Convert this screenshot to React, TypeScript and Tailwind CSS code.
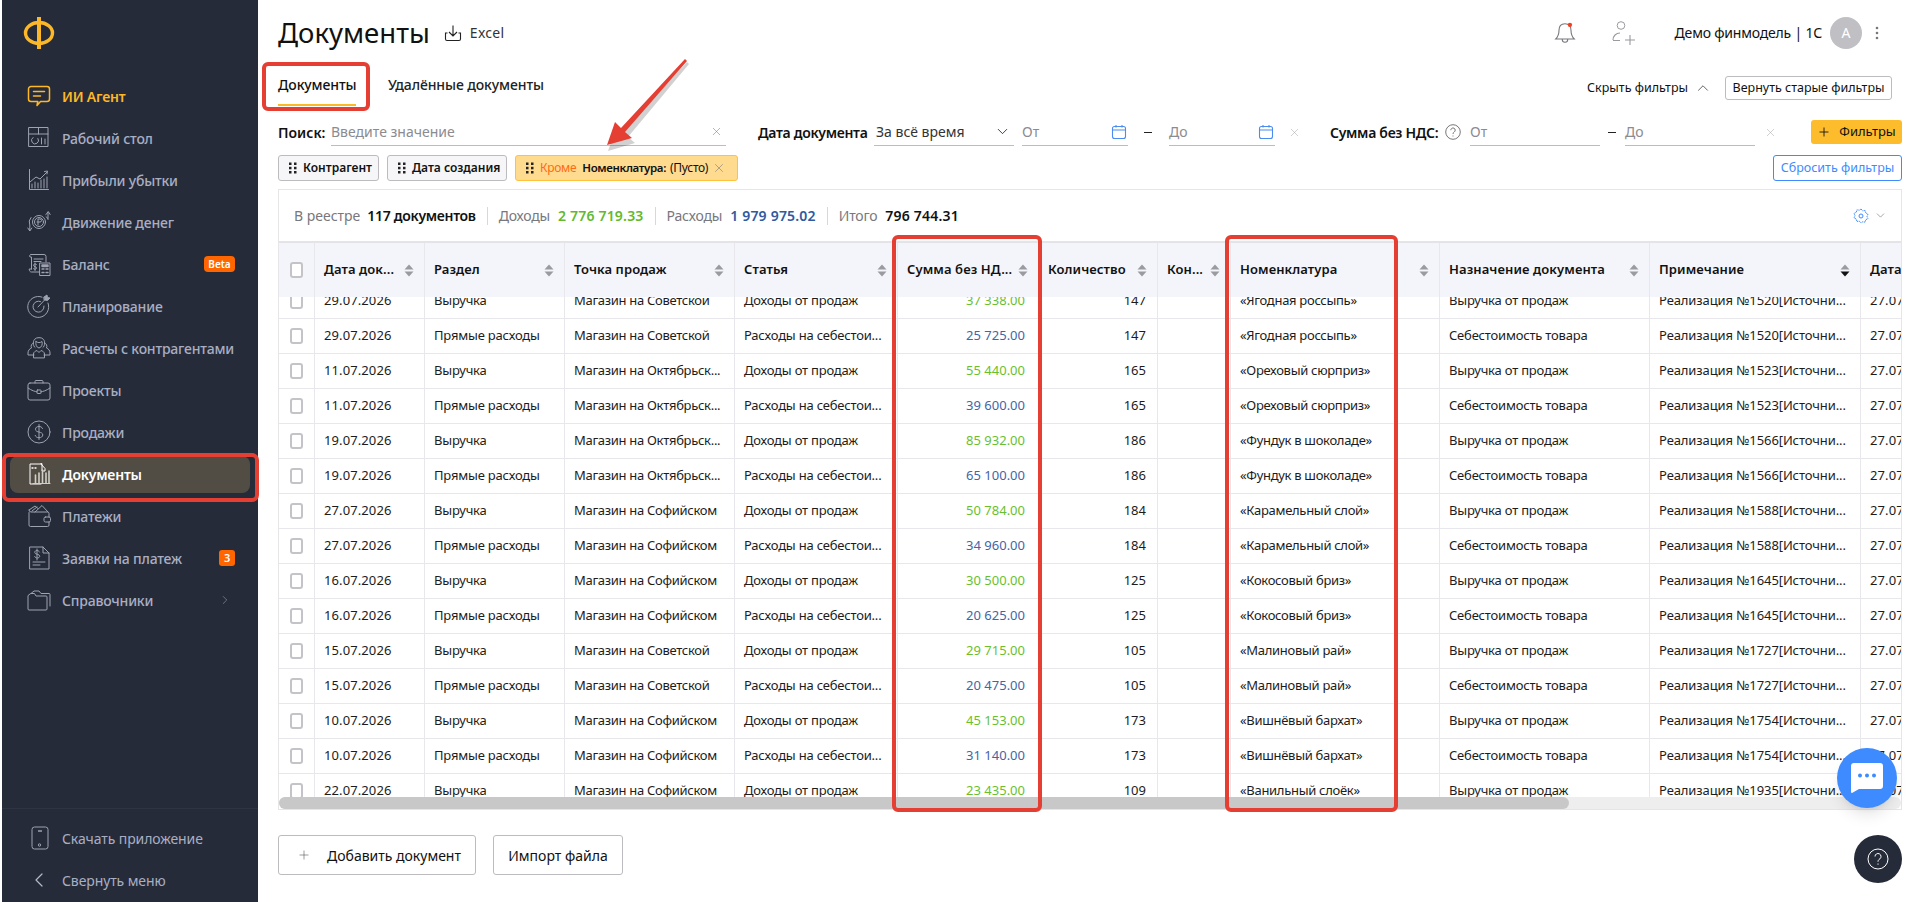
import React from 'react';
import { ChevronDown, ChevronUp, ChevronRight, ChevronLeft, X, Plus } from 'lucide-react';

type IconProps = { className?: string };

const Svg: React.FC<React.PropsWithChildren<{ className?: string; size?: number }>> = ({ className, size = 24, children }) => (
  <svg width={size} height={size} viewBox="0 0 24 24" fill="none" stroke="currentColor" strokeWidth={1} strokeLinecap="round" strokeLinejoin="round" className={className}>
    {children}
  </svg>
);

const AgentIcon = ({ className }: IconProps) => (
  <svg width={24} height={24} viewBox="0 0 24 24" fill="none" stroke="currentColor" strokeWidth={1.5} strokeLinecap="round" strokeLinejoin="round" className={className}>
    <path d="M4 2.500h16a2.500 2.500 0 0 1 2.500 2.500v10a2.500 2.500 0 0 1-2.500 2.500h-6.500l-3.500 4 .8-4H4A2.500 2.500 0 0 1 1.500 15V5A2.500 2.500 0 0 1 4 2.500z" />
    <path d="M6.500 7.500h11M6.500 12h7" />
  </svg>
);
const DeskIcon = ({ className }: IconProps) => (
  <Svg className={className}>
    <rect x="2" y="1.500" width="19" height="19" />
    <path d="M2 8h19M11.500 1.500V8" />
    <path d="M11 12.500a3.500 3.500 0 1 1-5-1" />
    <path d="M14.500 12v6M18 13v5" />
  </Svg>
);
const ProfitIcon = ({ className }: IconProps) => (
  <Svg className={className}>
    <path d="M2.500 1.500v20h19" />
    <path d="M5 20v-4M8 20v-6M11 20v-5M14 20v-8M17 20v-9M20 20V9" />
    <path d="M3 14l6-5 4 2 7-7M17.500 3.500l3-.5-.5 3" />
  </Svg>
);
const FlowIcon = ({ className }: IconProps) => (
  <Svg className={className}>
    <circle cx="12" cy="12" r="6.500" />
    <circle cx="12" cy="12" r="4.500" />
    <path d="M11 15v-6h2a1.500 1.500 0 0 1 0 3h-3" />
    <path d="M4 7.500A7 7 0 0 0 2.800 15v5M.8 18l2 3 2-3" />
    <path d="M19 6.500c1 .8 1.700 2 2 3V2.500M19 4.500l2.200-3 2 3" />
  </Svg>
);
const BalanceIcon = ({ className }: IconProps) => (
  <Svg className={className}>
    <path d="M4 2.500h13a2 2 0 0 1 2 2V10M4 2.500a1.500 1.500 0 0 0-1 2.500h1.500v12M4.500 17H2.200c0 2 1 3 2.300 3h8" />
    <path d="M7 7h9M7 9.500h7" />
    <path d="M9.500 12.500c-1-1-3-.5-3 .8 0 1.700 3 1 3 2.700 0 1.300-2 1.800-3 .8M8 11v7.500" />
    <rect x="13" y="11" width="10" height="12.500" />
    <path d="M15 13h6v1.500h-6zM15 17h2M19 17h2M15 20.500h2M19 20.500h2" strokeWidth={1.400} />
  </Svg>
);
const PlanIcon = ({ className }: IconProps) => (
  <Svg className={className}>
    <path d="M15 3.100A10.500 10.500 0 1 0 21 9" />
    <path d="M13.500 7.500A5.500 5.500 0 1 0 17 12" />
    <path d="M11 13l8-8.500" />
    <path d="M17 3l3-2 .5 2.500 2.500.5-2.500 2.500-3-.5z" fill="currentColor" />
  </Svg>
);
const PeopleIcon = ({ className }: IconProps) => (
  <Svg className={className}>
    <path d="M8 11.500C5.500 10 6 4 8 3c1-1.800 7-1.800 8 0 2 1 2.500 7 0 8.500" />
    <path d="M9 5.500c2 1.500 4 1.500 6 0 .8 3-.5 6-3 6.500-2.500-.5-3.800-3.500-3-6.500z" />
    <path d="M6.500 7c-2 .5-3 3-2 5-2 .8-3.500 2.500-3.500 5v2h6M17.500 7c2 .5 3 3 2 5 2 .8 3.500 2.500 3.500 5v2h-6" />
    <path d="M6.500 21.500V18c0-2 2-3 3.500-3.500l2 2 2-2c1.500.5 3.500 1.500 3.500 3.500v3.500z" />
  </Svg>
);
const CaseIcon = ({ className }: IconProps) => (
  <Svg className={className}>
    <rect x="1" y="5" width="22" height="17" rx="2" />
    <path d="M8 5V3.500a1 1 0 0 1 1-1h6a1 1 0 0 1 1 1V5" />
    <path d="M1 10c4 2.800 7 3.500 9 3.800M23 10c-4 2.800-7 3.500-9 3.800" />
    <rect x="10" y="12" width="4" height="3.500" rx=".5" />
  </Svg>
);
const SalesIcon = ({ className }: IconProps) => (
  <Svg className={className}>
    <circle cx="12" cy="12" r="11" />
    <path d="M15.500 8.500C15 7 13.500 6.500 12 6.500c-2 0-3.500 1-3.500 2.700 0 4 7.300 1.800 7.300 5.800 0 1.700-1.800 2.700-3.800 2.700-1.800 0-3.300-.8-3.800-2.300M12 4.500v15" />
  </Svg>
);
const DocsIcon = ({ className }: IconProps) => (
  <svg width={24} height={24} viewBox="0 0 24 24" fill="none" stroke="currentColor" strokeWidth={1} strokeLinecap="round" strokeLinejoin="round" className={className}>
    <path d="M14 2H3v20h11" stroke="#fff" />
    <path d="M14 2l4 4.500V9h-3V2z" stroke="#fff" />
    <path d="M5 6h1M8 6h1" stroke="#fff" strokeWidth={1.400} />
    <path d="M8.500 21v-8M12 21V11M15.500 21V8M19 21V11M22 21V9" stroke="#cfd0c8" strokeWidth={1.600} />
    <path d="M6 21.500h17" stroke="#cfd0c8" />
  </svg>
);
const WalletIcon = ({ className }: IconProps) => (
  <Svg className={className}>
    <path d="M2 8.500V21a1.500 1.500 0 0 0 1.500 1.500h17a1.500 1.500 0 0 0 1.500-1.500v-3M22 13V9.500A1.500 1.500 0 0 0 20.500 8H4a2 2 0 0 1-2-2" />
    <path d="M2 6l6-4 3 2.500M8 8l7-6.500L21 8M5 7l5-4" />
    <rect x="17" y="13" width="6.500" height="5" rx="1.500" />
  </Svg>
);
const RequestIcon = ({ className }: IconProps) => (
  <svg width={24} height={24} viewBox="0 0 24 24" fill="none" stroke="currentColor" strokeWidth={1} strokeLinecap="round" strokeLinejoin="round" className={className}>
    <path d="M3 1h13l6 6v16H3z" />
    <path d="M16 1v6h6" />
    <path d="M12.500 6C12 5 11 4.500 10 4.500c-1.300 0-2.300.7-2.300 1.800 0 2.700 5 1.200 5 3.900 0 1.100-1.200 1.800-2.500 1.800-1.200 0-2.200-.5-2.500-1.500M10 3v11" />
    <path d="M6 16h12M6 19h7" />
  </svg>
);
const FolderIcon = ({ className }: IconProps) => (
  <Svg className={className}>
    <path d="M1 8v13a1 1 0 0 0 1 1h17a1 1 0 0 0 1-1V9a1 1 0 0 0-1-1H9L7.500 5.500H4z" />
    <path d="M4 5.500l3-2.500h5l2 2.500h8a1 1 0 0 1 1 1V18" />
  </Svg>
);

const navItems: { label: string; Icon: React.FC<IconProps>; badge?: string }[] = [
  { label: 'Рабочий стол', Icon: DeskIcon },
  { label: 'Прибыли убытки', Icon: ProfitIcon },
  { label: 'Движение денег', Icon: FlowIcon },
  { label: 'Баланс', Icon: BalanceIcon, badge: 'Beta' },
  { label: 'Планирование', Icon: PlanIcon },
  { label: 'Расчеты с контрагентами', Icon: PeopleIcon },
  { label: 'Проекты', Icon: CaseIcon },
  { label: 'Продажи', Icon: SalesIcon },
];

const Sidebar = () => (
  <aside className="flex flex-col w-[256px] h-full ml-[2px] bg-[#262b3a] shrink-0">
    <div className="h-[75px] pl-[20px] pt-[16px]">
      <svg width="34" height="34" viewBox="0 0 34 34" fill="none" stroke="#fdb827" strokeWidth="3.400">
        <ellipse cx="17" cy="17" rx="13.500" ry="10.500" />
        <path d="M17 1v32" strokeWidth="4" />
      </svg>
    </div>
    <nav className="flex flex-col text-[14px] font-medium tracking-[-0.2px] text-[#a9afc2]">
      <a className="flex items-center h-[42px] pl-[25px] text-[#fdb827] font-semibold">
        <AgentIcon className="text-[#fdb827] shrink-0" />
        <span className="ml-[11px]">ИИ Агент</span>
      </a>
      {navItems.map(({ label, Icon, badge }) => (
        <a key={label} className="flex items-center h-[42px] pl-[25px] pr-[23px]">
          <Icon className="text-[#9ea3b0] shrink-0" />
          <span className="ml-[11px] whitespace-nowrap">{label}</span>
          {badge && <span className="ml-auto flex items-center justify-center w-[31px] h-[16px] rounded-[4px] bg-[#ff6600] text-white text-[10px] font-semibold tracking-normal">{badge}</span>}
        </a>
      ))}
      <div className="flex items-center h-[37px] my-[2.500px] mx-[8px] pl-[17px] rounded-[8px] bg-[#524d44] text-white font-semibold">
        <DocsIcon className="shrink-0" />
        <span className="ml-[11px]">Документы</span>
      </div>
      <a className="flex items-center h-[42px] pl-[25px]">
        <WalletIcon className="text-[#9ea3b0] shrink-0" />
        <span className="ml-[11px]">Платежи</span>
      </a>
      <a className="flex items-center h-[42px] pl-[25px] pr-[23px]">
        <RequestIcon className="text-[#9ea3b0] shrink-0" />
        <span className="ml-[11px]">Заявки на платеж</span>
        <span className="ml-auto flex items-center justify-center w-[16px] h-[16px] rounded-[3px] bg-[#ff6600] text-white text-[11px] font-semibold">3</span>
      </a>
      <a className="flex items-center h-[42px] pl-[25px] pr-[26px]">
        <FolderIcon className="text-[#9ea3b0] shrink-0" />
        <span className="ml-[11px]">Справочники</span>
        <ChevronRight size={14} strokeWidth={1} className="ml-auto text-[#9ea3b0]" />
      </a>
    </nav>
    <div className="mt-auto border-t border-[#2f3445] pt-[8px] pb-[1px] text-[14px] tracking-[-0.1px] text-[#a9afc2]">
      <div className="flex items-center h-[42px] pl-[25px]">
        <svg width="24" height="24" viewBox="0 0 24 24" fill="none" stroke="#9ea3b0" strokeWidth="1" className="shrink-0">
          <rect x="5" y="1" width="16" height="22" rx="2.500" />
          <path d="M11 5h4" strokeWidth="1.500" />
          <circle cx="12.500" cy="19" r="1.200" />
        </svg>
        <span className="ml-[11px]">Скачать приложение</span>
      </div>
      <div className="flex items-center h-[42px] pl-[25px]">
        <ChevronLeft size={24} strokeWidth={1.200} className="text-[#b5bac8] shrink-0" />
        <span className="ml-[11px]">Свернуть меню</span>
      </div>
    </div>
  </aside>
);

const columns: [string, number, boolean?][] = [
  ['Дата док...', 110],
  ['Раздел', 140],
  ['Точка продаж', 170],
  ['Статья', 163],
  ['Сумма без НД...', 141],
  ['Количество', 119],
  ['Кон...', 73],
  ['Номенклатура', 209],
  ['Назначение документа', 210],
  ['Примечание', 211, true],
  ['Дата', 60],
];

type Lot = { date: string; store: string; income: string; cost?: string; qty: string; item: string; no: string };

const lots: Lot[] = [
  { date: '29.07.2026', store: 'Магазин на Советской', income: '37 338.00', cost: '25 725.00', qty: '147', item: '«Ягодная россыпь»', no: '1520' },
  { date: '11.07.2026', store: 'Магазин на Октябрьск...', income: '55 440.00', cost: '39 600.00', qty: '165', item: '«Ореховый сюрприз»', no: '1523' },
  { date: '19.07.2026', store: 'Магазин на Октябрьск...', income: '85 932.00', cost: '65 100.00', qty: '186', item: '«Фундук в шоколаде»', no: '1566' },
  { date: '27.07.2026', store: 'Магазин на Софийском', income: '50 784.00', cost: '34 960.00', qty: '184', item: '«Карамельный слой»', no: '1588' },
  { date: '16.07.2026', store: 'Магазин на Софийском', income: '30 500.00', cost: '20 625.00', qty: '125', item: '«Кокосовый бриз»', no: '1645' },
  { date: '15.07.2026', store: 'Магазин на Советской', income: '29 715.00', cost: '20 475.00', qty: '105', item: '«Малиновый рай»', no: '1727' },
  { date: '10.07.2026', store: 'Магазин на Софийском', income: '45 153.00', cost: '31 140.00', qty: '173', item: '«Вишнёвый бархат»', no: '1754' },
  { date: '22.07.2026', store: 'Магазин на Софийском', income: '23 435.00', qty: '109', item: '«Ванильный слоёк»', no: '1935' },
];

const rows = lots.flatMap((l) => {
  const income = { ...l, section: 'Выручка', article: 'Доходы от продаж', amount: l.income, green: true, purpose: 'Выручка от продаж' };
  if (!l.cost) return [income];
  return [income, { ...l, section: 'Прямые расходы', article: 'Расходы на себестои...', amount: l.cost, green: false, purpose: 'Себестоимость товара' }];
});

const Checkbox = () => <span className="block w-[16px] h-[16px] rounded-[3px] border-2 border-[#c4c4c8] bg-white" />;

const SortArrows = ({ active }: { active?: boolean }) => (
  <svg width="10" height="13" viewBox="0 0 10 13" className="shrink-0">
    <path d="M5 0.500L9.500 5.500H0.500z" fill="#9a9aa0" />
    <path d="M5 12.500L9.500 7.500H0.500z" fill={active ? '#111' : '#9a9aa0'} />
  </svg>
);

const Cell: React.FC<React.PropsWithChildren<{ w: number; className?: string }>> = ({ w, className = '', children }) => (
  <div style={{ width: w }} className={`flex items-center shrink-0 h-full px-[9px] border-r border-[#e8e8ec] whitespace-nowrap overflow-hidden ${className}`}>
    {children}
  </div>
);

const DocsTable = () => (
  <div className="relative flex flex-col h-[621px] border border-[#e6e6e8] overflow-hidden">
    <div className="flex items-center h-[51px] shrink-0 pl-[15px] pr-[14px] text-[14px] text-[#77777d]">
      <span>В реестре</span>
      <b className="ml-[7px] text-[#111] font-semibold tracking-[-0.3px]">117 документов</b>
      <span className="w-px h-[18px] mx-[11px] bg-[#d8d8dc]" />
      <span className="tracking-[-0.2px]">Доходы</span>
      <b className="ml-[8px] text-[#62b92f] font-semibold tracking-[0.2px]">2 776 719.33</b>
      <span className="w-px h-[18px] mx-[11px] bg-[#d8d8dc]" />
      <span className="tracking-[-0.2px]">Расходы</span>
      <b className="ml-[8px] text-[#2e5aa0] font-semibold tracking-[0.2px]">1 979 975.02</b>
      <span className="w-px h-[18px] mx-[11px] bg-[#d8d8dc]" />
      <span className="tracking-[-0.2px]">Итого</span>
      <b className="ml-[8px] text-[#111] font-semibold tracking-[0.2px]">796 744.31</b>
      <svg width="16" height="16" viewBox="0 0 24 24" fill="none" stroke="#3d8bff" strokeWidth="1.500" strokeDasharray="2 1" className="ml-auto">
        <path d="M12 1.500l2.500 2.800 3.700-.5.900 3.600 3.400 1.700-1.500 3.400 1.500 3.400-3.400 1.700-.9 3.600-3.700-.5L12 22.500l-2.500-2.800-3.700.5-.9-3.600-3.400-1.700 1.500-3.400-1.500-3.400 3.400-1.700.9-3.600 3.700.5z" />
        <circle cx="12" cy="12" r="3" strokeDasharray="none" />
      </svg>
      <ChevronDown size={13} strokeWidth={1.200} className="ml-[5px] text-[#77777d]" />
    </div>
    <div className="flex h-[56px] shrink-0 border-t-2 border-[#e4e4e8] bg-[#f4f5fa] text-[13px] font-semibold tracking-[0.1px] text-[#111]">
      <Cell w={36} className="!px-[11px]"><Checkbox /></Cell>
      {columns.map(([name, w, active]) => (
        <Cell key={name} w={w} className="justify-between !pr-[10px]">
          <span>{name}</span>
          {name !== 'Дата' && <SortArrows active={active} />}
        </Cell>
      ))}
    </div>
    <div className="h-[501px] overflow-hidden text-[13px] text-[#1c1c1c]">
      {rows.map((r, i) => (
        <div key={i} className={`flex h-[35px] border-b border-[#e8e8ec] ${i === 0 ? '-mt-[13px]' : ''}`}>
          <Cell w={36} className="!px-[11px]"><Checkbox /></Cell>
          <Cell w={110} className="tracking-[0.1px]">{r.date}</Cell>
          <Cell w={140} className="tracking-[-0.2px]">{r.section}</Cell>
          <Cell w={170} className="tracking-[-0.3px]">{r.store}</Cell>
          <Cell w={163} className="tracking-[-0.2px]">{r.article}</Cell>
          <Cell w={141} className={`justify-end !pr-[13px] ${r.green ? 'text-[#6abf2e]' : 'text-[#3f66a8]'}`}>{r.amount}</Cell>
          <Cell w={119} className="justify-end !pr-[11px]">{r.qty}</Cell>
          <Cell w={73} />
          <Cell w={209} className="tracking-[-0.3px]">{r.item}</Cell>
          <Cell w={210} className="tracking-[-0.2px]">{r.purpose}</Cell>
          <Cell w={211} className="tracking-[-0.1px]">{`Реализация №${r.no}[Источни...`}</Cell>
          <Cell w={60} className="tracking-[0.1px]">27.07.2026</Cell>
        </div>
      ))}
    </div>
    <div className="h-[12px] shrink-0 rounded-full bg-[#eeeeee]">
      <div className="w-[1290px] h-full rounded-full bg-[#c8c8c8]" />
    </div>
  </div>
);

const Underlined: React.FC<React.PropsWithChildren<{ w: number; className?: string }>> = ({ w, className = '', children }) => (
  <div style={{ width: w }} className={`flex items-center justify-between h-[28px] shrink-0 border-b border-[#bdbdc0] text-[14px] text-[#8b8b90] ${className}`}>
    {children}
  </div>
);

const Calendar = () => (
  <svg width="16" height="16" viewBox="0 0 16 16" fill="none" stroke="#4a8cf0" strokeWidth="1.100" className="mr-px">
    <rect x="1.500" y="2.500" width="13" height="12" rx="2" />
    <path d="M1.500 6h13M5 1v2.500M11 1v2.500" />
  </svg>
);

const Chip: React.FC<React.PropsWithChildren<{ w: number; className?: string }>> = ({ w, className = 'bg-[#f6f6f8] border-[#bcbcc0]', children }) => (
  <div style={{ width: w }} className={`flex items-center h-[26px] pl-[10px] rounded-[3px] border text-[12px] font-semibold text-[#111] whitespace-nowrap ${className}`}>
    <svg width="8" height="12" viewBox="0 0 8 12" fill="#222" className="shrink-0 mr-[6px]">
      <rect x="0" y="0.500" width="2.500" height="2.500" /><rect x="5" y="0.500" width="2.500" height="2.500" />
      <rect x="0" y="4.800" width="2.500" height="2.500" /><rect x="5" y="4.800" width="2.500" height="2.500" />
      <rect x="0" y="9" width="2.500" height="2.500" /><rect x="5" y="9" width="2.500" height="2.500" />
    </svg>
    {children}
  </div>
);

const Annotations = () => (
  <>
    <div className="absolute left-[2px] top-[453px] w-[257px] h-[49px] rounded-[7px] border-[4px] border-[#e53e33]" />
    <div className="absolute left-[262px] top-[62px] w-[108px] h-[49px] rounded-[6px] border-[4px] border-[#e53e33]" />
    <div className="absolute left-[892px] top-[235px] w-[150px] h-[577px] rounded-[6px] border-[4px] border-[#e53e33]" />
    <div className="absolute left-[1225px] top-[235px] w-[173px] h-[577px] rounded-[6px] border-[4px] border-[#e53e33]" />
    <svg width="120" height="110" viewBox="0 0 120 110" className="absolute left-[600px] top-[50px]">
      <path d="M86 10L22 79l-6-6-9 26 27-8-7-6L88 12z" fill="#000" opacity=".18" transform="translate(1 2)" />
      <path d="M85 9L21 78l-6-6-8 23 25-7-7-6L87 11z" fill="#e53e33" />
    </svg>
  </>
);

export default function App() {
  return (
    <div className="relative flex w-[1921px] h-[902px] overflow-hidden bg-white font-['Noto_Sans',sans-serif] text-[#111]">
      <Sidebar />
      <main className="flex flex-col min-w-0 flex-1 pl-[20px] pr-[19px]">
        <header className="flex items-center h-[65px] shrink-0">
          <h1 className="text-[27.500px] leading-none font-normal">Документы</h1>
          <svg width="18" height="18" viewBox="0 0 18 18" fill="none" stroke="#222" strokeWidth="1.100" className="ml-[14px]">
            <path d="M9 1.500v10M5 8l4 4 4-4M3.500 9H1.500v6a1.500 1.500 0 0 0 1.500 1.500h12a1.500 1.500 0 0 0 1.500-1.500V9h-2" />
          </svg>
          <span className="ml-[8px] text-[14px] tracking-[0.3px] text-[#333]">Excel</span>
          <svg width="24" height="24" viewBox="0 0 22 22" fill="none" stroke="#77777d" strokeWidth="1" className="ml-auto">
            <path d="M11 2.500c-3.500 0-5.500 2.500-5.500 6 0 4.500-1 6-3 8h17c-2-2-3-3.500-3-8 0-3.500-2-6-5.500-6zM8.500 17a2.500 2.500 0 0 0 5 0" />
            <circle cx="15.500" cy="3.500" r="2" fill="#f0401f" stroke="none" />
          </svg>
          <svg width="26" height="26" viewBox="0 0 26 26" fill="none" stroke="#9a9aa0" strokeWidth="1" className="ml-[34px]">
            <circle cx="10" cy="5.500" r="3.800" />
            <path d="M2 20c0-4 3-7 7-7M2 20.500h7M14 20h10M19 15v10" strokeWidth="1.100" />
          </svg>
          <span className="ml-[38px] text-[14px] tracking-[-0.2px] whitespace-nowrap">Демо финмодель | 1С</span>
          <span className="flex items-center justify-center ml-[8px] w-[32px] h-[32px] rounded-full bg-[#bfbfc4] text-white text-[14px]">A</span>
          <svg width="4" height="14" viewBox="0 0 4 14" fill="#77777d" className="ml-[13px] mr-[23px]">
            <circle cx="2" cy="2" r="1.300" /><circle cx="2" cy="7" r="1.300" /><circle cx="2" cy="12" r="1.300" />
          </svg>
        </header>
        <div className="flex items-start h-[41px] shrink-0 text-[14px]">
          <div className="h-[41px] w-[78px] pt-[9px] border-b-2 border-[#fdb827] font-medium whitespace-nowrap tracking-[-0.1px]">Документы</div>
          <div className="ml-[32px] pt-[9px] font-medium text-[#222] tracking-[-0.1px]">Удалённые документы</div>
          <div className="flex items-center ml-auto mr-[10px] h-[46px] text-[12.500px]">
            <span>Скрыть фильтры</span>
            <ChevronUp size={18} strokeWidth={1.200} className="ml-[6px] mr-[13px] text-[#555]" />
            <span className="flex items-center justify-center h-[24px] w-[167px] rounded-[3px] border border-[#bcbcc0]">Вернуть старые фильтры</span>
          </div>
        </div>
        <div className="flex items-end h-[28px] mt-[12px] shrink-0 text-[14px]">
          <span className="self-center font-semibold w-[53px]">Поиск:</span>
          <Underlined w={395}>
            <span>Введите значение</span>
            <X size={13} strokeWidth={1} className="mr-[3px] text-[#777]" />
          </Underlined>
          <span className="self-center font-semibold tracking-[-0.3px] ml-[32px] w-[116px] whitespace-nowrap">Дата документа</span>
          <Underlined w={140} className="!text-[#333]">
            <span className="pl-[2px]">За всё время</span>
            <ChevronDown size={17} strokeWidth={1.200} className="mr-[3px] text-[#222]" />
          </Underlined>
          <Underlined w={106} className="ml-[8px]"><span>От</span><Calendar /></Underlined>
          <span className="self-center w-[8px] ml-[16px] h-px bg-[#222]" />
          <Underlined w={106} className="ml-[17px]"><span>До</span><Calendar /></Underlined>
          <X size={13} strokeWidth={1} className="self-center ml-[13px] text-[#aaa] shrink-0" />
          <span className="self-center font-semibold tracking-[-0.3px] ml-[29px] whitespace-nowrap w-[106px]">Сумма без НДС:</span>
          <svg width="16" height="16" viewBox="0 0 16 16" fill="none" stroke="#777" strokeWidth="1" className="self-center shrink-0 ml-[9px]">
            <circle cx="8" cy="8" r="7.300" />
            <path d="M5.800 6.200a2.200 2.200 0 1 1 3.400 1.800c-.8.500-1.200 1-1.200 2M8 11.500v1" />
          </svg>
          <Underlined w={130} className="ml-[9px]"><span>От</span></Underlined>
          <span className="self-center w-[8px] ml-[8px] h-px bg-[#222]" />
          <Underlined w={130} className="ml-[9px]"><span>До</span></Underlined>
          <X size={13} strokeWidth={1} className="self-center ml-[9px] text-[#aaa] shrink-0" />
          <span className="flex items-center justify-center gap-[8px] self-center ml-auto w-[91px] h-[24px] rounded-[3px] bg-[#fdbc2c] text-[13px]">
            <Plus size={14} strokeWidth={1.500} />Фильтры
          </span>
        </div>
        <div className="flex items-center gap-[8px] h-[26px] mt-[9px] shrink-0">
          <Chip w={101}>Контрагент</Chip>
          <Chip w={120}>Дата создания</Chip>
          <Chip w={223} className="bg-[#ffdb8f] border-[#ffc23c]">
            <span className="font-normal text-[#ff6a13] tracking-[-0.3px]">Кроме</span>
            <span className="ml-[6px] text-[11.500px] tracking-[-0.35px]">Номенклатура:</span>
            <span className="ml-[4px] font-normal tracking-[-0.3px]">(Пусто)</span>
            <X size={14} strokeWidth={1} className="ml-[4px] text-[#777]" />
          </Chip>
          <span className="flex items-center justify-center ml-auto w-[129px] h-[26px] rounded-[3px] border border-[#3d8bff] text-[12.500px] text-[#3d8bff]">Сбросить фильтры</span>
        </div>
        <div className="mt-[8px] shrink-0">
          <DocsTable />
        </div>
        <div className="flex gap-[17px] mt-[25px] text-[14px] shrink-0">
          <button className="flex items-center shrink-0 w-[198px] h-[40px] pl-[18px] rounded-[3px] border border-[#bcbcc0] whitespace-nowrap">
            <Plus size={14} strokeWidth={1} className="text-[#555] shrink-0" />
            <span className="ml-[16px]">Добавить документ</span>
          </button>
          <button className="shrink-0 w-[130px] h-[40px] rounded-[3px] border border-[#bcbcc0] whitespace-nowrap">Импорт файла</button>
        </div>
      </main>
      <Annotations />
      <div className="absolute left-[1837px] top-[748px] flex items-center justify-center w-[60px] h-[60px] rounded-full bg-[#3d8bff] shadow-lg">
        <svg width="32" height="30" viewBox="0 0 32 30">
          <path d="M3 0h26a3 3 0 0 1 3 3v20a3 3 0 0 1-3 3H8l-7 4a1 1 0 0 1-1-1V3a3 3 0 0 1 3-3z" fill="#fff" />
          <circle cx="9" cy="12.500" r="2" fill="#3d8bff" /><circle cx="16" cy="12.500" r="2" fill="#3d8bff" /><circle cx="23" cy="12.500" r="2" fill="#3d8bff" />
        </svg>
      </div>
      <div className="absolute left-[1854px] top-[835px] flex items-center justify-center w-[48px] h-[48px] rounded-full bg-[#262b3a]">
        <svg width="22" height="22" viewBox="0 0 22 22" fill="none" stroke="#fff" strokeWidth="1">
          <circle cx="11" cy="11" r="10" />
          <path d="M8 8.500a3 3 0 1 1 4.800 2.400c-1.100.8-1.800 1.400-1.800 2.800M11 15.500v1.200" />
        </svg>
      </div>
    </div>
  );
}
